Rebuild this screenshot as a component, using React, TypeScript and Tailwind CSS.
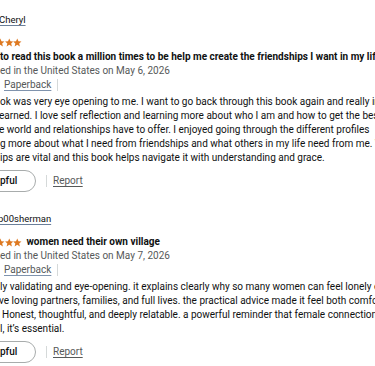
import React from "react";

interface IReview {
  name: string;
  nameIndent: string;
  title: string;
  titleOnOwnRow: boolean;
  date: string;
  lines: { text: string; indent: string }[];
}

const reviews: IReview[] = [
  {
    name: "Cheryl",
    nameIndent: "ml-[-1px]",
    title:
      "to read this book a million times to be help me create the friendships I want in my life",
    titleOnOwnRow: true,
    date: "ed in the United States on May 6, 2026",
    lines: [
      {
        text: "ok was very eye opening to me. I want to go back through this book again and really improve",
        indent: "ml-0",
      },
      {
        text: "earned. I love self reflection and learning more about who I am and how to get the best",
        indent: "ml-[-1px]",
      },
      {
        text: "e world and relationships have to offer. I enjoyed going through the different profiles",
        indent: "ml-[-1px]",
      },
      {
        text: "g more about what I need from friendships and what others in my life need from me. Women",
        indent: "ml-0",
      },
      {
        text: "ips are vital and this book helps navigate it with understanding and grace.",
        indent: "ml-0",
      },
    ],
  },
  {
    name: "p00sherman",
    nameIndent: "ml-[-2px]",
    title: "women need their own village",
    titleOnOwnRow: false,
    date: "ed in the United States on May 7, 2026",
    lines: [
      {
        text: "ly validating and eye-opening. it explains clearly why so many women can feel lonely even",
        indent: "ml-0",
      },
      {
        text: "ve loving partners, families, and full lives. the practical advice made it feel both comforting",
        indent: "ml-[-1px]",
      },
      {
        text: "Honest, thoughtful, and deeply relatable. a powerful reminder that female connection",
        indent: "ml-[2px]",
      },
      { text: "l, it’s essential.", indent: "ml-0" },
    ],
  },
];

const Star = () => (
  <svg viewBox="1.2 1.3 21.6 21" className="w-[8.5px] h-[9px] shrink-0" fill="#de7921">
    <path d="M12 1.5l3.1 7.1 7.6.6-5.8 5 1.8 7.5L12 17.7l-6.7 4 1.8-7.5-5.8-5 7.6-.6z" />
  </svg>
);

const Stars = () => (
  <div className="flex ml-[-21px] shrink-0">
    <Star />
    <Star />
    <Star />
    <Star />
    <Star />
  </div>
);

const ReviewCard = ({ review, first }: { review: IReview; first: boolean }) => {
  return (
    <div className={first ? "pt-[13px]" : "pt-[20px]"}>
      {/* reviewer name */}
      <p
        className={`${review.nameIndent} text-[9.5px] leading-[14px] text-[#0f1111] underline decoration-[#6b7f99] underline-offset-[2px]`}
      >
        {review.name}
      </p>

      {review.titleOnOwnRow ? (
        <>
          <div className="flex items-center h-[14px] mt-[8px]">
            <Stars />
          </div>
          <p className="mt-[1px] font-bold text-[#0f1111] whitespace-nowrap">
            {review.title}
          </p>
        </>
      ) : (
        <div className="flex items-center h-[14px] mt-[9px]">
          <Stars />
          <p className="ml-[5px] font-bold text-[#0f1111] whitespace-nowrap">
            {review.title}
          </p>
        </div>
      )}

      <p className="text-[#565959] whitespace-nowrap">{review.date}</p>

      <div className="flex items-center">
        <span className="ml-[4px] text-[#565959] underline decoration-[#7f93ad] underline-offset-[2px]">
          Paperback
        </span>
        <span className="ml-[6px] w-px h-[12px] bg-[#d5d9d9]"></span>
      </div>

      {/* review body */}
      <div className="mt-[3px] text-[#0f1111]">
        {review.lines.map((line) => (
          <p key={line.text} className={`${line.indent} whitespace-nowrap`}>
            {line.text}
          </p>
        ))}
      </div>

      {/* helpful / report */}
      <div className="flex items-center mt-[5px]">
        <button className="ml-[-30px] w-[66px] h-[22px] pl-[14px] rounded-full border border-[#a8acac] bg-white text-[#0f1111] text-[10px] font-medium flex items-center justify-start">
          Helpful
        </button>
        <span className="ml-[10px] w-px h-[12px] bg-[#d5d9d9]"></span>
        <span className="ml-[6px] text-[#565959] underline underline-offset-[2px]">
          Report
        </span>
      </div>
    </div>
  );
};

export default function App() {
  return (
    <div
      className="w-[375px] h-[366px] overflow-hidden bg-white text-[10px] leading-[14px]"
      style={{ fontFamily: "Roboto, 'Liberation Sans', sans-serif" }}
    >
      {reviews.map((review, i) => (
        <ReviewCard key={review.name} review={review} first={i === 0} />
      ))}
    </div>
  );
}
